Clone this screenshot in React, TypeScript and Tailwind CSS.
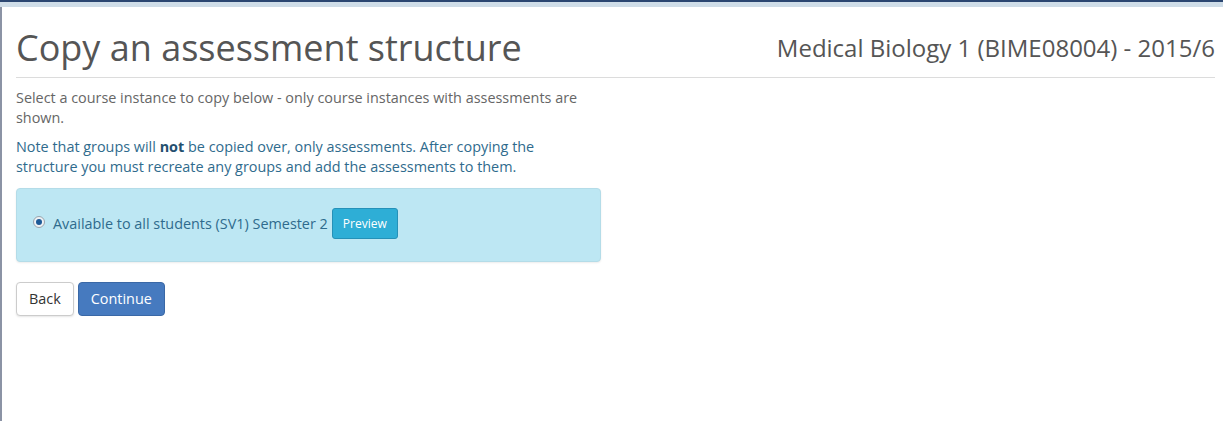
import React from 'react';

export default function App() {
  return (
    <div className="min-h-[421px] bg-white font-['Open_Sans',sans-serif] text-[14.4px] leading-5 text-[#666]">
      <div className="h-[2px] bg-[#2b4671]" />
      <div className="h-[5px] bg-[#cfdde8]" />
      <div className="flex min-h-[414px] border-l-2 border-[#8b93a5]">
        <div className="flex-1 pl-[14px] pr-2">
          {/* Page header */}
          <div className="flex items-end justify-between border-b border-[#dcdcdc] pb-[5px] pt-[17px]">
            <h1 className="text-[36px] font-normal leading-[48px] text-[#555]">
              Copy an assessment structure
            </h1>
            <div className="pb-[8px] text-[24px] leading-8 text-[#555]">
              Medical Biology 1 (BIME08004) - 2015/6
            </div>
          </div>

          <div className="w-[585px] pt-[10px]">
            <p className="mb-[9px] w-[572px]">
              Select a course instance to copy below - only course instances with assessments are shown.
            </p>
            <p className="mb-[11px] w-[572px] text-[#2f6b8d]">
              Note that groups will <strong className="font-bold text-[#24506f]">not</strong> be copied over, only
              assessments. After copying the structure you must recreate any groups and add the assessments to them.
            </p>

            {/* Course instance list */}
            <div className="mb-5 h-[74px] rounded-[4px] border border-[#b4dce8] bg-[#bde7f3] px-4 pt-[19px] shadow-[0_1px_2px_rgba(0,0,0,0.08)]">
              <label className="flex items-center text-[#2f6b8d]">
                <span className="mr-[8px] -mt-[4px] flex h-[12px] w-[12px] items-center justify-center rounded-full border border-[#9aa4ad] bg-[#eef2f5]">
                  <span className="h-[6px] w-[6px] rounded-full bg-[#1d5a97]" />
                </span>
                Available to all students (SV1) Semester 2
                <button className="ml-[4px] h-[31px] rounded-[3px] border border-[#2591b8] bg-[#2eaed6] px-[10px] text-[12px] text-white">
                  Preview
                </button>
              </label>
            </div>

            <div className="flex gap-[4px]">
              <button className="h-[34px] rounded-[4px] border border-[#ccc] bg-white px-[12px] text-[14.4px] text-[#333] shadow-[0_1px_2px_rgba(0,0,0,0.1)]">
                Back
              </button>
              <button className="h-[34px] rounded-[4px] border border-[#3a68a6] bg-[#467abf] px-[12px] text-[14.4px] text-white">
                Continue
              </button>
            </div>
          </div>
        </div>
      </div>
    </div>
  );
}
